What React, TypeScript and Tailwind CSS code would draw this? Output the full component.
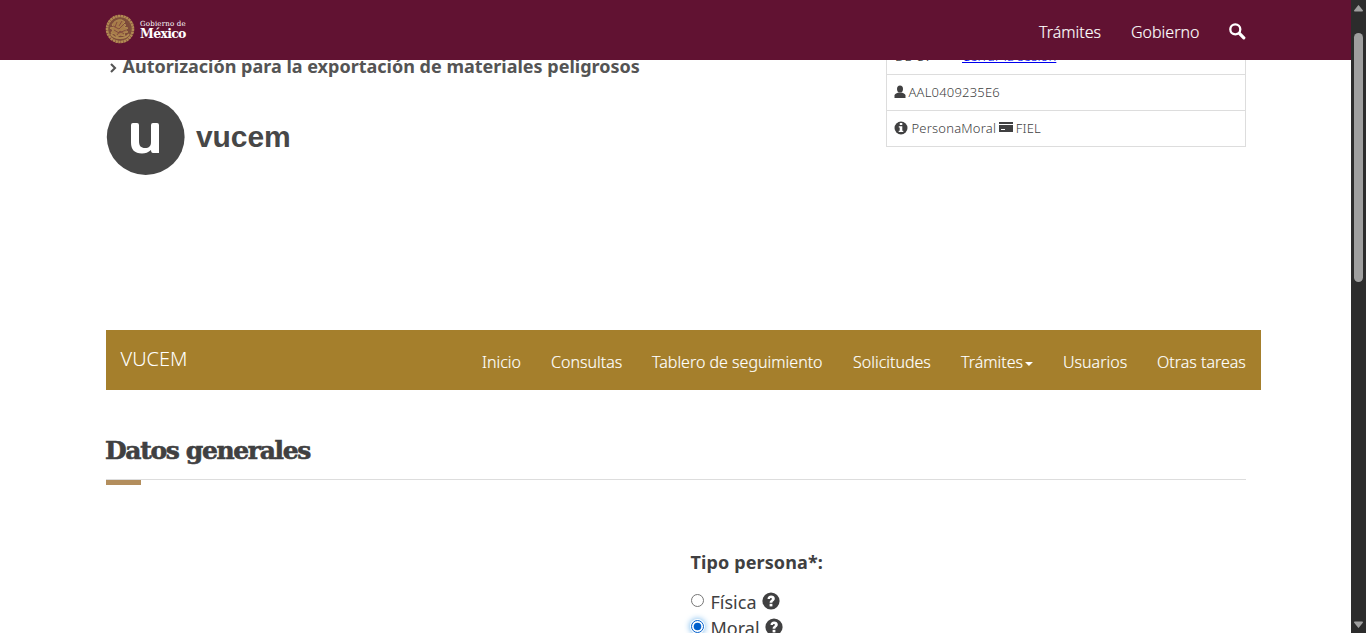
import React from "react";

const navItems = [
  { label: "Inicio", width: "w-[39px]" },
  { label: "Consultas", width: "w-[71px]" },
  { label: "Tablero de seguimiento", width: "w-[171px]" },
  { label: "Solicitudes", width: "w-[78px]" },
  { label: "Trámites", width: "w-[72px]", caret: true },
  { label: "Usuarios", width: "w-[64px]" },
  { label: "Otras tareas", width: "w-[89px]" },
];

function Seal() {
  return (
    <svg width="30" height="30" viewBox="0 0 30 30" fill="none" stroke="#b18a52" className="shrink-0">
      <circle cx="15" cy="15" r="13" fill="#7d4a3a" strokeWidth="2.6" strokeDasharray="2.4 .4" />
      <circle cx="15" cy="15" r="10.6" stroke="#80533a" strokeWidth=".8" />
      <path d="M7 11c2-4 6-6 10-5l3 2-2 2 3 1-2 2 4 1-3 2 3 2-4 1 1 3-5-1-3 2-2-3-4-1 2-3-3-2 4-1Z" fill="#a77c49" strokeWidth="1" />
      <path d="m8 12 6 3 5-5M9 16l5 3 7-3M12 8l-2 5M17 7l-3 5M12 21l3-4 4 3" stroke="#7a3f3b" strokeWidth=".8" />
      <path d="M6 20c3 5 14 6 18 0" strokeWidth="1.8" />
    </svg>
  );
}

function Search() {
  return (
    <svg width="17" height="17" viewBox="0 0 17 17" fill="none" stroke="white" className="shrink-0">
      <circle cx="6.3" cy="6.3" r="5" strokeWidth="2.3" />
      <path d="m10.400 10.400 4.400 4.400" strokeWidth="3.2" strokeLinecap="round" />
    </svg>
  );
}

function Help() {
  return (
    <svg width="18" height="18" viewBox="0 0 18 18" className="-mt-[2px] shrink-0">
      <circle cx="9" cy="9" r="8.600" fill="#404041" />
      <path d="M5.500 7C5.500 4.800 7 3.400 9.100 3.400c2.200 0 3.700 1.200 3.700 3.200 0 1.300-.7 2.100-1.500 2.700-.7.500-.9.800-.9 1.500H7.600c0-1.600.7-2.200 1.500-2.800.5-.4.8-.7.8-1.200 0-.5-.4-.8-.9-.8-.7 0-1 .4-1 1Z" fill="white" />
      <path d="M7.600 11.800h2.800v2.600H7.600z" fill="white" />
    </svg>
  );
}

export default function App() {
  return (
    <div className="flex h-[633px] w-[1366px] overflow-hidden bg-white font-['Noto_Sans',sans-serif] text-[#404041]">
      <div className="flex h-full w-[1351px] flex-col">
        <header className="z-10 flex h-[60px] shrink-0 items-start bg-[#611232] pl-[105px] text-white">
          <div className="flex items-start pt-[14px]">
            <Seal />
            <div className="ml-[5px] mt-[6px] font-['DejaVu_Serif',serif]">
              <div className="h-[7px] whitespace-nowrap text-[7px] leading-[8px] tracking-[0.2px]">Gobierno de</div>
              <div className="text-[12.5px] font-bold leading-[14px] tracking-[-0.7px]">México</div>
            </div>
          </div>
          <nav className="ml-auto mr-[105px] flex items-start pt-[20px] text-base font-light leading-6 [-webkit-text-stroke:0.15px_white]">
            <a className="w-[62px] whitespace-nowrap">Trámites</a>
            <a className="ml-[30px] w-[68px] whitespace-nowrap">Gobierno</a>
            <span className="ml-[30px] mt-[3px]"><Search /></span>
          </nav>
        </header>

        <main className="min-h-0 flex-1 overflow-hidden">
          <div className="flex h-[270px] items-start justify-between pl-[106px] pr-[105px]">
            <div>
              <div className="-mt-[7px] flex h-[26px] items-center whitespace-nowrap text-[18px] font-bold leading-[26px] text-[#545454]">
                <svg width="16" height="14" viewBox="0 0 16 14" fill="none" stroke="#545454" strokeWidth="2.1" className="mt-[4px]">
                  <path d="m5 3 4 4-4 4" />
                </svg>
                <span className="ml-[0.5px]">Autorización para la exportación de materiales peligrosos</span>
              </div>
              <div className="mt-[19px] flex items-center">
                <svg width="80" height="78" viewBox="0 0 80 78" className="shrink-0">
                  <ellipse cx="39.700" cy="39" rx="38.900" ry="38" fill="#474747" />
                  <path d="M25 27q0-2 2-2h4q2 0 2 2v16c0 5 2 7 6 7 4 0 6-2 6-6V27q0-2 2-2h4q2 0 2 2v28h-6q-2 0-2-3-4 3.500-9 3.500c-7.500 0-11-4-11-11Z" fill="white" />
                </svg>
                <span className="-mt-[1px] ml-[10px] font-['Liberation_Sans',sans-serif] text-[30px] font-bold leading-9 tracking-[-0.1px] text-[#474747]">vucem</span>
              </div>
            </div>
            <div className="-mt-[22px] w-[360px] border border-[#dddddd] text-[13px] font-light tracking-[0.2px]">
              <div className="flex h-[36px] items-center border-b border-[#dddddd] pl-[8px]">
                <span className="w-[67px]">DE CV</span>
                <a className="whitespace-nowrap tracking-[0.15px] text-[#0000ee] underline">Cerrar la sesión</a>
              </div>
              <div className="flex h-[36px] items-center border-b border-[#dddddd] pl-[7px]">
                <svg width="12" height="14" viewBox="0 0 12 14" fill="#404041" className="-mt-[2px] mr-[2.5px]">
                  <ellipse cx="6" cy="4" rx="3" ry="3.500" />
                  <path d="M.5 13v-2.500c0-1.500 2-2.500 4-3h3c2 .5 4 1.500 4 3V13Z" />
                </svg>
                <span>AAL0409235E6</span>
              </div>
              <div className="flex h-[35px] items-center pl-[7px]">
                <svg width="14" height="14" viewBox="0 0 14 14" className="-mt-[2px] mr-[3.5px]">
                  <circle cx="7" cy="7" r="6.500" fill="#404041" />
                  <path d="M5.800 2h2.500v2H5.800zM4.800 5.200h3.500v4.500h1V11H4.700V9.700h1V6.500h-.9Z" fill="white" />
                </svg>
                <span>PersonaMoral</span>
                <svg width="14" height="12" viewBox="0 0 14 12" className="-mt-[3px] ml-[2.5px] mr-[3px]">
                  <path d="M0 1h14v10H0Z" fill="#404041" />
                  <path d="M0 3h14v1H0ZM2 8h4v1H2Z" fill="white" />
                </svg>
                <span>FIEL</span>
              </div>
            </div>
          </div>

          <div className="ml-[106px] flex h-[60px] w-[1155px] items-start bg-[#a57f2c] text-white">
            <span className="pl-[14.5px] pt-[15px] text-[20px] font-light leading-7">VUCEM</span>
            <nav className="ml-auto flex gap-[30px] pr-[15px] pt-[20px] text-base font-light leading-6 [-webkit-text-stroke:0.15px_white]">
              {navItems.map((item) => (
                <a key={item.label} className={`${item.width} flex items-center whitespace-nowrap`}>
                  {item.label}
                  {item.caret && <svg width="8" height="4" viewBox="0 0 8 4" fill="white" className="ml-[2px] mt-[3px]"><path d="M0 0h8L4 4Z" /></svg>}
                </a>
              ))}
            </nav>
          </div>

          <section className="pl-[106px]">
            <div className="mt-[40px] h-[50px] w-[1140px] border-b border-[#dddddd]">
              <h1 className="-ml-[1px] whitespace-nowrap pt-[3px] font-['DejaVu_Serif',serif] text-[25px] font-bold leading-[36px] tracking-[-1.35px] [-webkit-text-stroke:0.6px_#404041]">Datos generales</h1>
            </div>
            <div className="h-[5px] w-[35px] bg-[#b38e5d]" />
            <div className="ml-[584.5px] mt-[64px]">
              <div className="text-[18px] font-bold leading-[26px] tracking-[0.12px]">Tipo persona*:</div>
              <label className="mt-[14px] flex h-[26px] items-center text-[18px] font-normal leading-[26px]">
                <svg width="15" height="15" viewBox="0 0 15 15" className="-ml-[0.5px] -mt-[3px] mr-[5.5px]">
                  <circle cx="7.500" cy="7.500" r="6" fill="white" stroke="#767676" />
                </svg>
                <span className="mr-[5px]">Física</span>
                <Help />
              </label>
              <label className="flex h-[26px] items-center text-[18px] font-normal leading-[26px]">
                <svg width="15" height="15" viewBox="0 0 15 15" className="-ml-[0.5px] -mt-[3px] mr-[5.5px] rounded-full shadow-[0_0_6px_#66afe9]">
                  <circle cx="7.500" cy="7.500" r="6" fill="white" stroke="#005fcc" />
                  <circle cx="7.500" cy="7.500" r="3.800" fill="#005fcc" />
                </svg>
                <span className="mr-[5px]">Moral</span>
                <Help />
              </label>
            </div>
          </section>
        </main>
      </div>
      <div className="flex h-full w-[15px] shrink-0 flex-col items-center bg-[#2c2c2c]">
        <svg width="9" height="8" viewBox="0 0 9 8" fill="#9f9f9f" className="mt-[4px]"><path d="M4 1.500q.5-.8 1 0L9 6.500q0 1-.8 1H.8q-.8 0-.8-1Z" /></svg>
        <div className="mt-[21px] h-[249px] w-[9px] rounded-full bg-[#9f9f9f]" />
        <svg width="9" height="8" viewBox="0 0 9 8" fill="#9f9f9f" className="mb-[4px] mt-auto"><path d="M4 6.500q.5.800 1 0L9 1.500q0-1-.8-1H.8q-.8 0-.8 1Z" /></svg>
      </div>
    </div>
  );
}
